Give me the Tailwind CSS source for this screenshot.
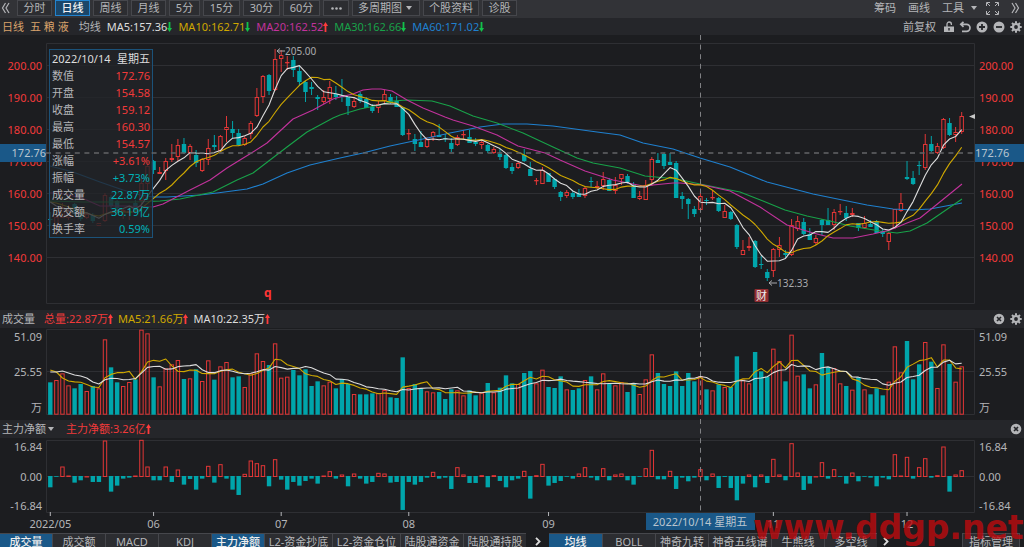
<!DOCTYPE html>
<html lang="zh-CN">
<head>
  <meta charset="UTF-8">
  <meta name="viewport" content="width=device-width, initial-scale=1.0">
  <title>五粮液 日线</title>
  <script src="https://cdn.jsdelivr.net/npm/@tailwindcss/browser@4"></script>
</head>
<body class="bg-[#1c1d20] text-[#b4b5b8] text-[11px] leading-4 font-['Noto_Sans','Noto_Sans_CJK_SC',sans-serif] overflow-hidden">
<svg class="hidden">
  <symbol id="up" viewBox="0 0 5 10"><path d="M2.5 0L5 4H3.4V10H1.6V4H0z" fill="#ff3b3b"/></symbol>
  <symbol id="down" viewBox="0 0 5 10"><path d="M2.5 10L5 6H3.4V0H1.6V6H0z" fill="#12c24a"/></symbol>
  <symbol id="caret" viewBox="0 0 6 4"><path d="M0 0H6L3 4z" fill="currentColor"/></symbol>
  <symbol id="close" viewBox="0 0 12 12"><circle cx="6" cy="6" r="5.3" fill="currentColor"/><path d="M4 4l4 4M8 4l-4 4" stroke="#25262a" stroke-width="1.6"/></symbol>
  <symbol id="gear" viewBox="0 0 12 12"><circle cx="6" cy="6" r="3" fill="none" stroke="currentColor" stroke-width="2.2"/><path d="M6 0.3v2M6 9.7v2M0.3 6h2M9.7 6h2M2 2l1.4 1.4M8.6 8.6L10 10M10 2L8.6 3.4M3.4 8.6L2 10" stroke="currentColor" stroke-width="2"/></symbol>
</svg>

<div class="relative min-h-screen flex flex-col">
  <!-- Period toolbar -->
  <header class="flex items-start h-[18px] bg-[#323337] shrink-0">
    <button class="w-[17px] h-4 flex items-center" aria-label="收起">
      <svg class="w-[9px] h-3 ml-px" viewBox="0 0 9 12" fill="none" stroke="currentColor" stroke-width="1.2"><path d="M4.5 1L1.5 6l3 5M8 1L5 6l3 5"/></svg>
    </button>
    <nav class="flex gap-[3px]">
      <button class="w-[35px] h-4 leading-[14px] border border-[#46474c] bg-[#2c2d31]">分时</button>
      <button class="w-[35px] h-4 leading-[14px] border border-[#2384cf] bg-[#1b4669] text-[#f0f0f0] font-medium">日线</button>
      <button class="w-[35px] h-4 leading-[14px] border border-[#46474c] bg-[#2c2d31]">周线</button>
      <button class="w-[35px] h-4 leading-[14px] border border-[#46474c] bg-[#2c2d31]">月线</button>
      <button class="w-[31px] h-4 leading-[14px] border border-[#46474c] bg-[#2c2d31]">5分</button>
      <button class="w-[37px] h-4 leading-[14px] border border-[#46474c] bg-[#2c2d31]">15分</button>
      <button class="w-[37px] h-4 leading-[14px] border border-[#46474c] bg-[#2c2d31]">30分</button>
      <button class="w-[37px] h-4 leading-[14px] border border-[#46474c] bg-[#2c2d31]">60分</button>
      <button class="w-[26px] h-4 flex items-center justify-center border border-[#46474c] bg-[#2c2d31]" aria-label="更多周期">
        <svg class="w-[11px] h-[3px]" viewBox="0 0 11 3" fill="currentColor"><circle cx="1.5" cy="1.5" r="1.3"/><circle cx="5.5" cy="1.5" r="1.3"/><circle cx="9.5" cy="1.5" r="1.3"/></svg>
      </button>
      <label class="w-[68px] h-4 flex items-center border border-[#46474c] bg-[#2c2d31]">
        <select class="appearance-none w-[53px] pl-[5px] leading-[14px]" aria-label="多周期图"><option>多周期图</option></select>
        <svg class="w-[6px] h-1"><use href="#caret"/></svg>
      </label>
      <button class="w-[56px] h-4 leading-[14px] border border-[#46474c] bg-[#2c2d31]">个股资料</button>
      <button class="w-[35px] h-4 leading-[14px] border border-[#46474c] bg-[#2c2d31]">诊股</button>
    </nav>
    <div class="ml-auto flex items-center h-4 pr-1">
      <button class="mr-3">筹码</button>
      <button class="mr-3">画线</button>
      <label class="flex items-center mr-[9px]">
        <select class="appearance-none w-[29px]" aria-label="工具"><option>工具</option></select>
        <svg class="w-[6px] h-1"><use href="#caret"/></svg>
      </label>
      <button class="mr-3" aria-label="全屏">
        <svg class="w-[13px] h-[13px]" viewBox="0 0 13 13" fill="none" stroke="currentColor"><path d="M.5 4V.5H4M9 .5h3.500V4M12.500 9v3.500H9M4 12.500H.5V9M1 1l3 3M12 1L9 4M12 12L9 9M1 12l3-3"/></svg>
      </button>
      <button aria-label="展开">
        <svg class="w-[9px] h-3" viewBox="0 0 9 12" fill="none" stroke="currentColor" stroke-width="1.2"><path d="M1 1l3 5-3 5M4.500 1l3 5-3 5"/></svg>
      </button>
    </div>
  </header>

  <!-- Moving averages -->
  <div class="flex items-center h-[17px] pl-[2px] pr-[2px] bg-[#25262a] shrink-0">
    <span class="text-[#d9a36c] mr-[6px]">日线</span>
    <span class="text-[#d9a36c] mr-[10px]">五 粮 液</span>
    <span class="mr-[6px]">均线</span>
    <span class="text-[#dddddd] flex items-center mr-[6px]">MA5:157.36<svg class="w-[5px] h-[10px]"><use href="#down"/></svg></span>
    <span class="text-[#cfa800] flex items-center mr-[6px]">MA10:162.71<svg class="w-[5px] h-[10px]"><use href="#down"/></svg></span>
    <span class="text-[#c2329c] flex items-center mr-[6px]">MA20:162.52<svg class="w-[5px] h-[10px]"><use href="#up"/></svg></span>
    <span class="text-[#18a249] flex items-center mr-[6px]">MA30:162.66<svg class="w-[5px] h-[10px]"><use href="#down"/></svg></span>
    <span class="text-[#1f80cf] flex items-center">MA60:171.02<svg class="w-[5px] h-[10px]"><use href="#down"/></svg></span>
    <div class="ml-auto flex items-center gap-[5px]">
      <button class="mr-[3px]">前复权</button>
      <button aria-label="锁定"><svg class="w-[10px] h-3 block" viewBox="0 0 10 12"><path d="M3 6V3.200a2.200 2.200 0 0 1 4.400 0V4" fill="none" stroke="currentColor" stroke-width="1.300"/><path d="M0 5.500h10V11H0zM4.300 7v2.500h1.400V7z" fill="currentColor" fill-rule="evenodd"/></svg></button>
      <button aria-label="撤销"><svg class="w-3 h-3 block" viewBox="0 0 12 12" fill="none" stroke="currentColor" stroke-width="1.700"><path d="M4.500.8L1.800 3.300l2.700 2.500M2 3.300h5.500a3.500 3.500 0 0 1 0 7H3"/></svg></button>
      <button aria-label="放大"><svg class="w-3 h-3 block" viewBox="0 0 12 12"><circle cx="6" cy="6" r="5.500" fill="currentColor"/><path d="M3 6h6M6 3v6" stroke="#25262a" stroke-width="1.800"/></svg></button>
      <button aria-label="缩小"><svg class="w-3 h-3 block" viewBox="0 0 12 12"><circle cx="6" cy="6" r="5.500" fill="currentColor"/><path d="M3 6h6" stroke="#25262a" stroke-width="1.800"/></svg></button>
      <button aria-label="设置"><svg class="w-3 h-3 block"><use href="#gear"/></svg></button>
    </div>
  </div>

  <!-- Candles -->
  <div class="relative">
    <svg id="price" class="block w-full" viewBox="0 35 1024 275">
      <path d="M46.500 43.500H974.500V303.500H46.500zM46.500 65.500H974.500M46.500 97.500H974.500M46.500 129.500H974.500M46.500 161.500H974.500M46.500 193.500H974.500M46.500 225.500H974.500M46.500 257.500H974.500" fill="none" stroke="#2e2f33"/>
      <g id="priceAxis" class="fill-[#f23a3a]"></g>
      <g id="candles"></g>
      <g id="priceLines" fill="none" stroke-width="1.1" stroke-linejoin="round"></g>
      <g class="fill-[#a9aaad] text-[10px]"><text x="285" y="55">205.00</text><text x="777" y="287">132.33</text></g>
      <path d="M277 51H285M280 48.500L277 51L280 53.500M769 283H777M772 280.500L769 283L772 285.500" fill="none" stroke="#a9aaad"/>
      <text x="264" y="297" class="fill-[#ff3535] text-[12px] font-bold">q</text>
      <rect x="754.500" y="289" width="14" height="13" rx="1" fill="#8f2c30"/>
      <text x="761.500" y="299.500" text-anchor="middle" class="fill-[#eeeeee] text-[11px]">财</text>
      <path d="M969 116.500L975 114V119z" fill="#c8c8c8"/>
      <rect x="0" y="144" width="46" height="18" fill="#1a5888"/>
      <rect x="975" y="144" width="49" height="18" fill="#1a5888"/>
      <g class="fill-[#b9c5cf]"><text x="46" y="157" text-anchor="end">172.76</text><text x="975" y="157">172.76</text></g>
    </svg>
    <table class="absolute left-[49px] top-[14px] w-[104px] border border-[#1b5279] bg-[#222428]/80 border-separate border-spacing-0">
      <tbody id="quote"></tbody>
    </table>
  </div>

  <!-- Volume -->
  <div class="flex items-center h-[18px] px-[2px] bg-[#25262a] shrink-0">
    <span class="mr-[9px]">成交量</span>
    <span class="text-[#f23a3a] flex items-center mr-[5px]">总量:22.87万<svg class="w-[5px] h-[10px]"><use href="#up"/></svg></span>
    <span class="text-[#cfa800] flex items-center mr-[5px]">MA5:21.66万<svg class="w-[5px] h-[10px]"><use href="#up"/></svg></span>
    <span class="text-[#dddddd] flex items-center">MA10:22.35万<svg class="w-[5px] h-[10px]"><use href="#up"/></svg></span>
    <div class="ml-auto flex gap-[5px]">
      <button aria-label="关闭成交量"><svg class="w-3 h-3 block"><use href="#close"/></svg></button>
      <button aria-label="成交量设置"><svg class="w-3 h-3 block"><use href="#gear"/></svg></button>
    </div>
  </div>
  <svg class="block w-full" viewBox="0 328 1024 92">
    <path d="M46.500 329.500H974.500V414.500H46.500zM46.500 371.500H974.500" fill="none" stroke="#2e2f33"/>
    <g class="fill-[#b4b5b8]" text-anchor="end"><text x="42" y="341">51.09</text><text x="42" y="376">25.55</text><text x="42" y="412">万</text></g>
    <g class="fill-[#b4b5b8]"><text x="979" y="341">51.09</text><text x="979" y="376">25.55</text><text x="979" y="412">万</text></g>
    <g id="volume"></g>
    <g id="volumeLines" fill="none" stroke-width="1.1" stroke-linejoin="round"></g>
  </svg>

  <!-- Net main-force flow -->
  <div class="flex items-center h-[18px] px-[2px] bg-[#25262a] shrink-0">
    <label class="flex items-center mr-3">
      <select class="appearance-none w-[46px]" aria-label="指标"><option>主力净额</option></select>
      <svg class="w-[6px] h-1"><use href="#caret"/></svg>
    </label>
    <span class="text-[#f23a3a] flex items-center">主力净额:3.26亿<svg class="w-[5px] h-[10px]"><use href="#up"/></svg></span>
    <button class="ml-auto" aria-label="关闭主力净额"><svg class="w-3 h-3 block"><use href="#close"/></svg></button>
  </div>
  <svg class="block w-full" viewBox="0 438 1024 95">
    <path d="M46.500 440.500H974.500V512.500H46.500zM46.500 476.500H974.500" fill="none" stroke="#2e2f33"/>
    <g class="fill-[#b4b5b8]" text-anchor="end"><text x="42" y="451">16.84</text><text x="42" y="481">0.00</text><text x="42" y="510">-16.84</text></g>
    <g class="fill-[#b4b5b8]"><text x="979" y="451">16.84</text><text x="979" y="481">0.00</text><text x="979" y="510">-16.84</text></g>
    <g id="flow"></g>
    <g id="months" class="fill-[#b4b5b8]" text-anchor="middle"></g>
    <rect x="646" y="513" width="109" height="17" fill="#1a5888"/>
    <text x="700" y="526" text-anchor="middle" class="fill-[#b9c5cf]">2022/10/14 星期五</text>
  </svg>

  <!-- Indicator tabs -->
  <footer class="flex h-[14px] overflow-hidden bg-[#1c1d20] shrink-0">
    <div class="flex h-4 gap-px bg-[#46474c] border-t border-[#46474c]">
      <button class="w-[52px] bg-[#1a5888] text-[#eeeeee] font-medium">成交量</button>
      <button class="w-[52px] bg-[#2c2d31]">成交额</button>
      <button class="w-[52px] bg-[#2c2d31]">MACD</button>
      <button class="w-[52px] bg-[#2c2d31]">KDJ</button>
      <button class="w-[52px] bg-[#1a5888] text-[#eeeeee] font-medium">主力净额</button>
      <button class="w-[67px] bg-[#2c2d31]">L2-资金抄底</button>
      <button class="w-[67px] bg-[#2c2d31]">L2-资金仓位</button>
      <button class="w-[62px] bg-[#2c2d31]">陆股通资金</button>
      <button class="w-[62px] bg-[#2c2d31]">陆股通持股</button>
    </div>
    <button class="w-[23px] h-4 flex items-center justify-center bg-[#1c1d20] text-[#dddddd]" aria-label="更多副图指标"><svg class="w-[6px] h-[9px]" viewBox="0 0 6 9" fill="none" stroke="currentColor" stroke-width="1.8"><path d="M1 .8l3.600 3.700L1 8.200"/></svg></button>
    <div class="flex h-4 gap-px bg-[#46474c] border-t border-[#46474c]">
      <button class="w-[53px] bg-[#1a5888] text-[#eeeeee] font-medium">均线</button>
      <button class="w-[52px] bg-[#2c2d31]">BOLL</button>
      <button class="w-[52px] bg-[#2c2d31]">神奇九转</button>
      <button class="w-[62px] bg-[#2c2d31]">神奇五线谱</button>
      <button class="w-[52px] bg-[#2c2d31]">牛熊线</button>
      <button class="w-[52px] bg-[#2c2d31]">多空线</button>
    </div>
    <button class="w-[18px] h-4 flex items-center justify-center text-[#dddddd]" aria-label="更多主图指标"><svg class="w-[6px] h-[9px]" viewBox="0 0 6 9" fill="none" stroke="currentColor" stroke-width="1.8"><path d="M1 .8l3.600 3.700L1 8.200"/></svg></button>
    <button class="ml-auto mr-1 w-[58px] h-4 border border-[#46474c] bg-[#2c2d31]">指标管理</button>
  </footer>

  <!-- Crosshair and site mark lie over every panel -->
  <svg class="absolute left-0 top-[35px] w-full pointer-events-none" viewBox="0 35 1024 477">
    <path d="M700.500 35V512" fill="none" stroke="#808184" stroke-dasharray="5 4.600"/>
    <path d="M46 153H974" fill="none" stroke="#636467" stroke-width="1.6" stroke-dasharray="5 4.600"/>
  </svg>
  <div class="absolute right-0 bottom-0 w-[271px] h-[39px] leading-[39px] text-[33px] font-bold whitespace-nowrap text-[#c00a0e]/80 font-['DejaVu_Sans',sans-serif] pointer-events-none">www.ddgp.net</div>
</div>

<script>
  const UP = '#e23636', DOWN = '#00a5ab';
  const barX = i => 50.3 + i * 6.076;

  // side, high, body top, body bottom, low
  const candles = `G 212 219 220 226,R 213 217 227 235,R 203 207 218 218,R 205 210 218 220,G 203 204 214 216,G 213 213 219 221,R 213 214 218 219,G 213 215 221 223,R 223 223 226 226,R 193 195 221 222,
G 195 197 206 209,G 200 201 208 212,R 208 210 212 219,R 207 211 213 220,G 200 203 211 214,R 178 183 201 208,R 162 166 184 190,G 160 161 170 174,R 167 172 174 174,R 158 161 171 180,
R 144 158 160 162,R 139 145 157 161,G 138 144 153 154,R 144 146 153 160,G 150 155 163 167,R 158 159 171 172,R 139 148 160 165,G 135 145 147 150,R 135 136 151 152,R 116 127 130 142,
G 121 129 133 138,G 129 133 145 146,R 136 138 145 146,R 121 123 134 139,R 88 97 116 117,R 75 76 97 103,G 74 75 91 95,R 49 59 90 91,R 50 55 59 72,R 56 62 63 70,
G 56 60 70 77,G 66 71 82 86,G 81 82 92 102,G 82 87 89 95,G 95 97 99 110,R 90 97 102 104,R 81 87 99 104,G 86 94 97 100,G 79 96 97 102,G 97 97 106 115,
R 98 101 107 108,G 92 94 101 103,G 97 99 108 108,G 104 107 111 113,R 101 104 108 113,R 90 94 101 103,G 94 97 103 104,G 96 101 107 107,G 107 108 135 136,R 129 133 134 140,
G 134 139 144 151,G 131 142 147 147,R 137 139 147 148,R 131 132 137 141,G 124 135 137 137,G 134 138 139 142,G 138 143 149 152,R 135 137 145 146,R 130 134 135 139,G 130 137 143 143,
G 138 142 144 146,R 139 142 145 149,G 144 145 151 153,R 147 149 153 154,G 149 154 157 160,G 154 155 168 169,G 163 167 171 174,R 162 163 168 169,G 149 155 161 162,G 162 169 176 176,
R 178 180 181 185,R 167 170 184 184,G 173 173 182 182,G 178 179 187 189,G 191 192 197 201,R 190 192 196 198,G 191 193 197 199,G 189 193 197 197,R 186 188 196 198,G 177 181 182 187,
R 181 186 188 189,R 172 179 186 190,G 178 180 191 191,R 177 185 191 194,R 174 174 179 185,G 174 176 182 184,G 182 185 198 198,R 191 196 199 200,R 180 185 200 200,R 157 159 180 186,
G 153 160 163 163,G 153 154 166 169,G 153 162 165 165,G 161 163 198 198,G 192 196 199 209,G 198 199 204 219,G 206 209 214 217,R 191 196 210 211,G 198 200 201 205,R 190 197 198 200,
G 197 198 211 212,R 205 211 218 218,G 211 212 219 220,G 224 225 247 249,R 240 250 255 255,R 237 246 248 251,G 240 241 267 268,G 256 264 265 269,G 269 272 278 281,R 248 249 271 277,
R 237 245 250 257,G 250 253 255 258,R 219 225 255 256,R 216 221 229 231,G 218 222 234 235,G 228 234 240 240,R 235 238 243 245,G 219 220 225 235,G 208 220 225 225,R 209 212 225 230,
R 204 211 212 215,G 206 213 218 221,R 208 213 215 217,G 223 223 228 231,R 216 223 228 229,G 220 224 227 227,G 220 221 233 233,G 229 231 234 237,R 232 233 242 250,R 209 209 228 229,
R 193 203 211 212,G 161 177 179 180,G 171 178 184 185,G 161 165 166 175,R 134 144 168 170,G 136 144 151 152,R 143 146 153 154,R 118 119 148 149,G 118 123 135 136,R 127 132 135 142,R 112 116 132 134`
    .split(',').map(row => {
      const [side, ...y] = row.trim().split(' ');
      return [side === 'R', ...y.map(Number)];
    });

  const volumes = [217,210,190,226,235,222,243,228,235,88,172,217,228,216,208,59,70,202,229,175,163,150,207,205,178,213,151,209,169,156,202,199,231,190,130,153,165,100,203,200,180,196,178,228,214,226,215,235,
    207,222,252,253,253,250,249,240,262,264,142,234,222,235,244,247,246,267,238,241,256,241,256,248,219,247,233,196,220,222,189,183,220,179,231,234,199,238,240,235,210,199,238,190,222,226,216,246,219,252,208,133,189,222,228,184,
    228,189,214,198,238,241,223,231,231,139,209,220,126,184,200,116,153,214,74,197,193,235,223,129,172,174,220,228,239,202,238,253,235,256,215,109,187,93,208,163,96,155,234,103,162,215,169].map(v => 310 + v / 3);

  const flows = [-33,-1,30,3,-19,-12,1,-17,-17,108,-46,-28,-7,-4,3,110,30,-12,-12,30,-17,21,-25,-8,-40,-7,32,-19,37,-7,-40,-56,8,48,40,34,-30,52,-10,-40,-17,-28,-14,-7,-22,3,16,-7,
    6,-30,9,-7,-22,-17,11,9,-19,-17,-101,-17,-25,-17,-4,14,-7,-4,-38,28,6,-20,-20,4,-33,4,-14,-33,-12,-7,17,-67,4,38,-28,-20,-14,-1,-7,9,28,-4,-12,25,-12,6,9,-12,-25,-1,25,80,-9,-9,17,-38,
    -4,-15,-4,22,-12,9,-35,-2,-35,-72,-22,6,-33,6,-20,53,6,-12,100,12,-41,-22,1,43,-7,22,-1,-22,12,-15,-1,-4,-30,-4,-9,67,3,59,-7,28,55,-4,4,90,-46,6,19].map(v => v / 3);

  // red bars are hollow, teal bars are solid
  const bar = (x, top, bottom, hollow) => hollow
    ? `<rect x="${x - 1.7}" y="${top + 0.5}" width="3.4" height="${Math.max(bottom - top - 1, 0.3)}" fill="none" stroke="${UP}"/>`
    : `<rect x="${x - 2.2}" y="${top}" width="4.4" height="${Math.max(bottom - top, 0.8)}" fill="${DOWN}"/>`;

  document.getElementById('candles').innerHTML = candles.map(([up, high, top, bottom, low], i) => {
    const x = barX(i);
    return `<path d="M${x} ${high}V${top}M${x} ${bottom}V${low}" stroke="${up ? UP : DOWN}"/>` + bar(x, top, bottom, up);
  }).join('');

  document.getElementById('volume').innerHTML = volumes.map((top, i) => bar(barX(i), top, 414.7, candles[i][0])).join('');

  document.getElementById('flow').innerHTML = flows.map((v, i) => v > 0
    ? bar(barX(i), 476.5 - v, 477, true)
    : bar(barX(i), 476, 476.3 - v, false)).join('');

  // Moving average; seed holds the first points, whose history is off screen
  const average = (values, n, seed) => values.map((_, i) =>
    i < seed.length ? seed[i] : values.slice(i - n + 1, i + 1).reduce((a, b) => a + b, 0) / n);
  const line = (points, color) => `<polyline points="${points}" stroke="${color}"/>`;
  const series = values => values.map((y, i) => `${barX(i)},${y}`).join(' ');

  const closes = candles.map(([up, , top, bottom]) => up ? top : bottom);
  const ma20 = '50,193 60,193 82,198 100,206 127,206 153,207 163,204 190,190 210,180 227,168 253,152 267,143 280,131 293,119 313,110 333,99 340,97 353,94 363,90 372,89 381,89 392,91 407,100 423,108 445,117 453,120 473,126 497,135 518,146 545,153 560,160 585,171 613,180 643,186 673,183 680,183 703,185 730,191 760,207 787,225 813,233 833,238 853,238 873,234 890,230 907,223 920,218 930,210 962,184';
  const ma30 = '50,201 83,202 133,202 160,201 180,199 213,192 237,180 253,173 287,147 307,132 333,118 340,115 360,109 380,105 393,101 407,100 432,101 450,106 473,116 497,123 523,133 553,147 577,158 593,163 620,168 645,176 677,179 700,184 740,192 763,201 785,210 807,216 830,221 850,226 880,231 897,233 910,231 927,223 962,199';
  const ma60 = '50,166 73,172 100,182 123,190 140,195 153,197 167,197 200,195 217,193 247,189 263,184 287,173 310,165 340,158 363,153 390,146 423,139 450,133 480,127 503,124 527,124 553,126 597,132 620,135 643,143 673,149 700,158 730,167 767,182 813,194 867,205 893,209 913,210 930,209 962,203';
  document.getElementById('priceLines').innerHTML =
    line(ma60, '#1f80cf') + line(ma30, '#18a249') + line(ma20, '#c2329c') +
    line(series(average(closes, 10, [202, 203, 205, 207, 209, 211, 213, 215, 216])), '#cfa800') +
    line(series(average(closes, 5, [202, 206, 208, 211])), '#dddddd');

  document.getElementById('volumeLines').innerHTML =
    line(series(average(volumes, 5, [370, 372, 378, 381])), '#cfa800') +
    line(series(average(volumes, 10, [372, 372, 371, 373, 375, 376, 378, 382, 384])), '#dddddd');

  document.getElementById('priceAxis').innerHTML = [200, 190, 180, 170, 160, 150, 140].map((p, i) =>
    `<text x="42" y="${70 + i * 32}" text-anchor="end">${p}.00</text><text x="979" y="${70 + i * 32}">${p}.00</text>`).join('');

  document.getElementById('months').innerHTML = [[0, '2022/05'], [17, '06'], [38, '07'], [59, '08'], [82, '09'], [119, '11'], [141, '12']].map(([i, name]) =>
    `<path d="M${barX(i)} 512V516" stroke="#b4b5b8"/><text x="${barX(i)}" y="528">${name}</text>`).join('');

  const quote = [
    ['2022/10/14', '星期五', 'text-[#dddddd]'],
    ['数值', '172.76', 'text-[#f23a3a]'],
    ['开盘', '154.58', 'text-[#f23a3a]'],
    ['收盘', '159.12', 'text-[#f23a3a]'],
    ['最高', '160.30', 'text-[#f23a3a]'],
    ['最低', '154.57', 'text-[#f23a3a]'],
    ['涨幅', '+3.61%', 'text-[#f23a3a]'],
    ['振幅', '+3.73%', 'text-[#00b1b8]'],
    ['成交量', '22.87万', 'text-[#00b1b8]'],
    ['成交额', '36.19亿', 'text-[#00b1b8]'],
    ['换手率', '0.59%', 'text-[#00b1b8]']
  ];
  document.getElementById('quote').innerHTML = quote.map(([name, value, color], i) =>
    `<tr class="h-[17px]"><th class="p-0 pl-[2px] text-left font-normal ${i ? '' : color}">${name}</th><td class="p-0 pr-[2px] text-right ${color}">${value}</td></tr>`).join('');
</script>
</body>
</html>
